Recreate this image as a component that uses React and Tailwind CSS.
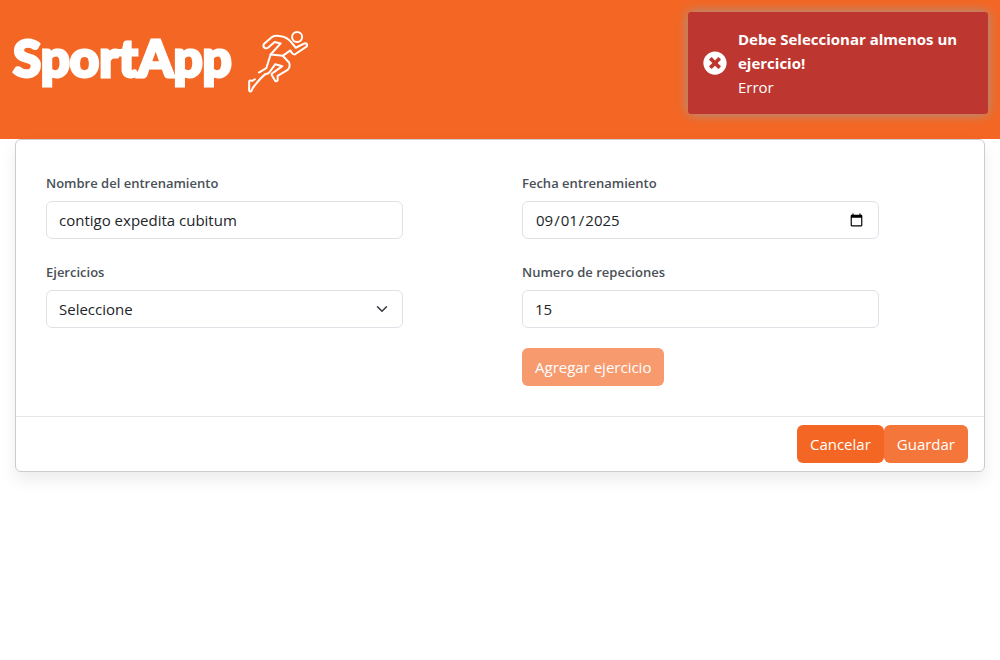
import React from "react";

const labelClass = "block text-[13px] leading-5 font-semibold text-[#495057]";
const controlClass =
  "mt-2 block h-[38px] w-full rounded-md border border-[#dee2e6] bg-white px-3 text-[15px] leading-6 text-[#212529]";
const buttonClass = "h-[38px] rounded-md px-[13px] text-[15px] leading-6 text-white";

function Runner() {
  return (
    <svg viewBox="36 30 184 188" className="h-[63px] w-[62px]" fill="none" stroke="white" strokeWidth="6" strokeLinejoin="round" strokeLinecap="round" aria-hidden="true">
      <circle cx="182" cy="51" r="15" />
      <path d="M56 177 L48 182 Q39 178 39 184 L39 211 Q40 214 45 213 L51 201 Q72 174 88 161 Q97 161 101 154 L117 132 L138 138 L110 158 Q104 161 107 166 L117 182 Q121 185 124 180 L124 167 L154 149 Q163 140 158 127 L139 107 L162 91 Q167 103 175 103 L211 79 Q214 69 204 70 L178 83 L163 65 Q151 50 129 48 Q115 46 107 51 L83 72 Q79 80 86 84 Q91 86 96 82 L115 66 L133 70 L103 103 L90 144 L68 157" />
      <path d="M103 103 L139 107" />
    </svg>
  );
}

function Toast() {
  return (
    <div role="alert" className="absolute top-3 right-3 flex w-[300px] items-center gap-[11px] rounded-[3px] bg-[#bd362f] p-[15px] text-[15px] leading-6 text-white shadow-[0_0_12px_#999999]">
      <svg viewBox="0 0 512 512" className="h-6 w-6 shrink-0" fill="white" aria-hidden="true">
        <path d="M256 8C119 8 8 119 8 256s111 248 248 248 248-111 248-248S393 8 256 8zm121.600 313.100c4.700 4.700 4.700 12.300 0 17L338 377.600c-4.700 4.700-12.300 4.700-17 0L256 312l-65.100 65.600c-4.700 4.700-12.300 4.700-17 0L134.400 338c-4.700-4.700-4.700-12.300 0-17l65.600-65-65.600-65.100c-4.700-4.700-4.700-12.300 0-17l39.600-39.600c4.700-4.700 12.300-4.700 17 0l65 65.700 65.100-65.600c4.700-4.700 12.300-4.700 17 0l39.600 39.600c4.700 4.700 4.700 12.300 0 17L312 256l65.600 65.100z" />
      </svg>
      <div>
        <p className="font-bold">Debe Seleccionar almenos un ejercicio!</p>
        <p>Error</p>
      </div>
    </div>
  );
}

export default function App() {
  return (
    <div className="min-h-screen bg-white font-['Open_Sans','Noto_Sans',sans-serif]">
      <header className="flex h-[139px] items-start gap-4 bg-[#f46623] px-[13px] pt-[30px]">
        <h1 className="font-['Lato',sans-serif] text-[51px] leading-[56px] font-black text-white [-webkit-text-stroke:3px_white]">SportApp</h1>
        <Runner />
      </header>
      <main className="px-[15px]">
        <form className="rounded-md border border-[#cccccc] bg-white shadow-[0_8px_16px_rgba(0,0,0,0.08)]" onSubmit={(e) => e.preventDefault()}>
          <div className="grid grid-cols-2 gap-x-[119px] gap-y-[23px] pt-[33px] pr-[105px] pb-[30px] pl-[30px]">
            <div>
              <label htmlFor="name" className={labelClass}>Nombre del entrenamiento</label>
              <input id="name" type="text" defaultValue="contigo expedita cubitum" className={controlClass} />
            </div>
            <div>
              <label htmlFor="date" className={labelClass}>Fecha entrenamiento</label>
              <input id="date" type="date" defaultValue="2025-09-01" className={controlClass} />
            </div>
            <div>
              <label htmlFor="exercise" className={labelClass}>Ejercicios</label>
              <div className="relative">
                <select id="exercise" className={controlClass + " appearance-none"}>
                  <option>Seleccione</option>
                </select>
                <svg viewBox="0 0 16 16" className="pointer-events-none absolute top-[13px] right-[15px] h-3 w-3" fill="none" stroke="#343a40" strokeWidth="2" strokeLinecap="round" strokeLinejoin="round" aria-hidden="true">
                  <path d="m2 5 6 6 6-6" />
                </svg>
              </div>
            </div>
            <div>
              <label htmlFor="reps" className={labelClass}>Numero de repeciones</label>
              <input id="reps" type="number" defaultValue="15" className={controlClass} />
              <button type="button" disabled className={buttonClass + " mt-5 bg-[#f46623] opacity-65"}>Agregar ejercicio</button>
            </div>
          </div>
          <div className="flex justify-end border-t border-[#e7e7e7] py-2 pr-4">
            <button type="button" className={buttonClass + " bg-[#f46623]"}>Cancelar</button>
            <button type="submit" className={buttonClass + " bg-[#f4763a]"}>Guardar</button>
          </div>
        </form>
      </main>
      <Toast />
    </div>
  );
}
